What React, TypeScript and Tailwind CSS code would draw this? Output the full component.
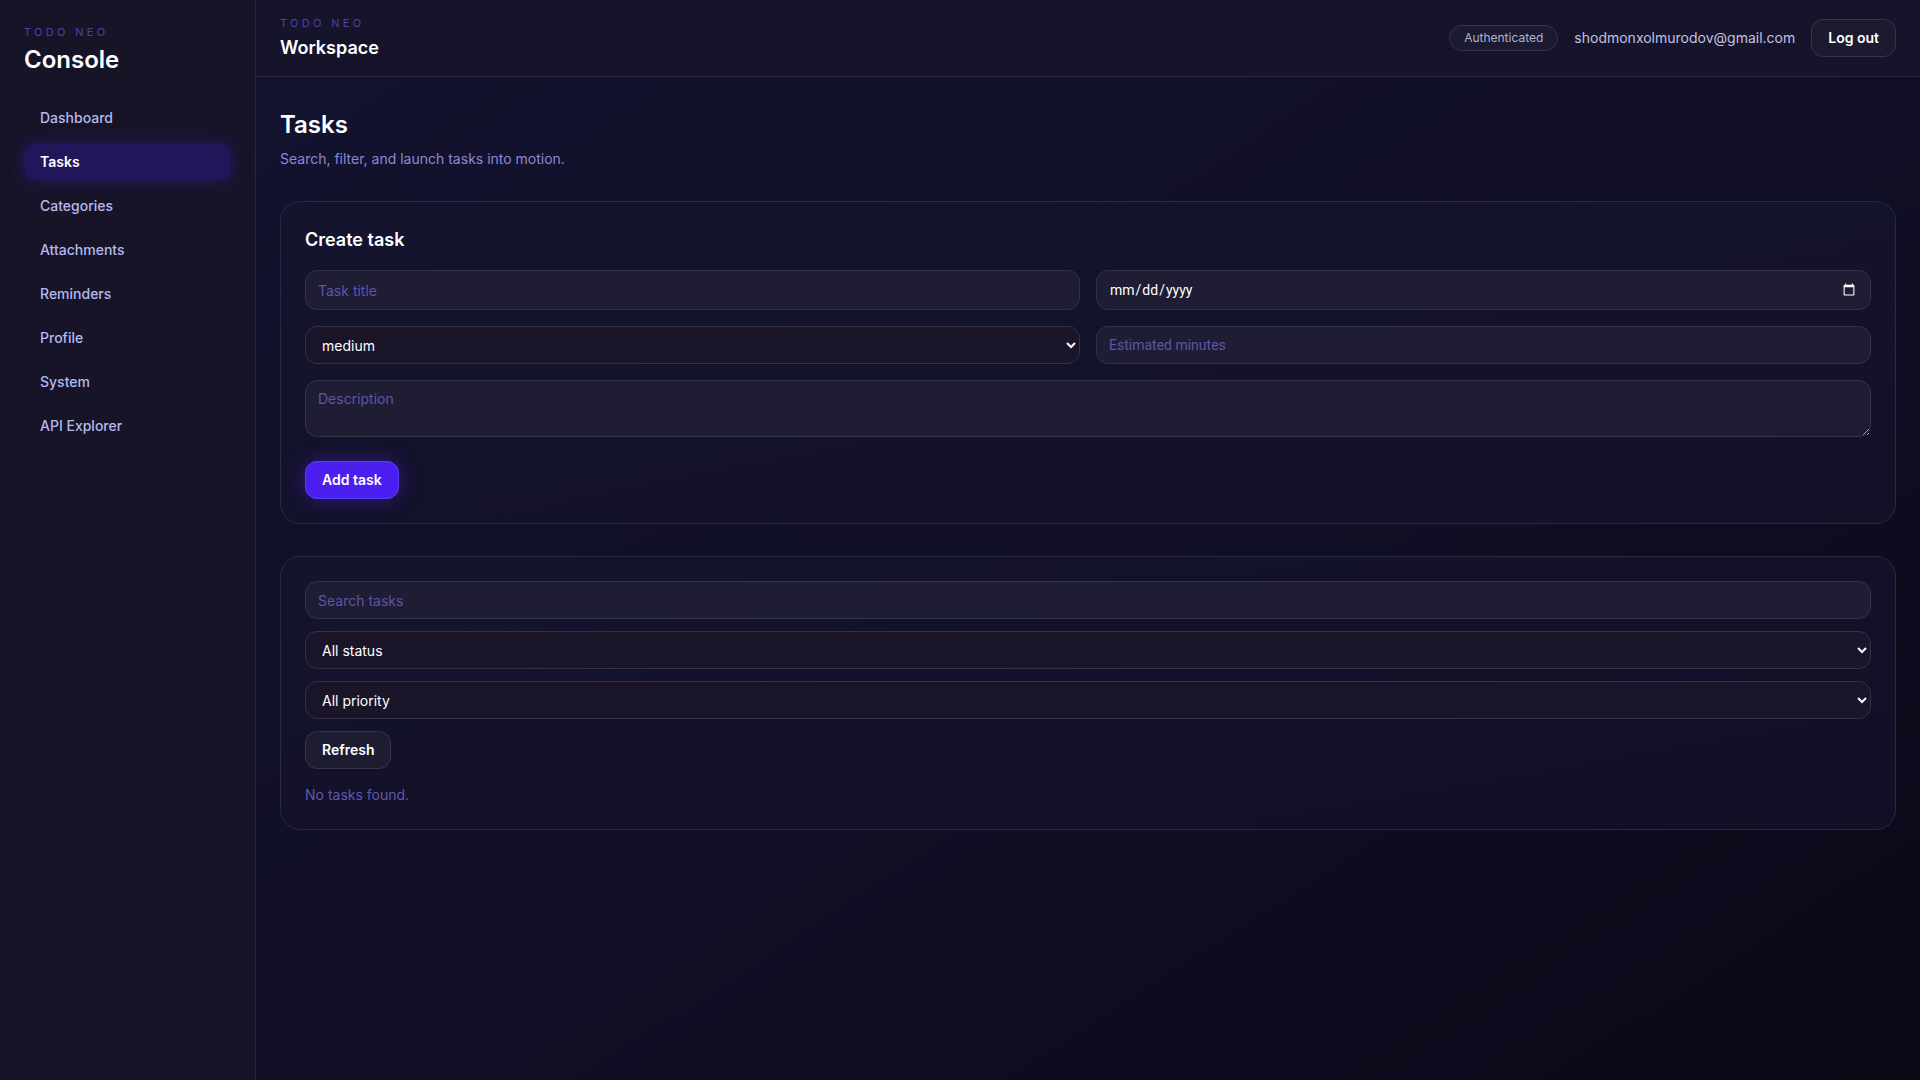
import React from "react";

const navItems = [
  "Dashboard",
  "Tasks",
  "Categories",
  "Attachments",
  "Reminders",
  "Profile",
  "System",
  "API Explorer",
];

const font = { fontFamily: "Inter, 'Noto Sans', sans-serif" };

function Sidebar() {
  return (
    <aside className="w-[256px] shrink-0 border-r border-[#2a2740] bg-[#171428] px-6 pt-6">
      <div className="text-[11px] leading-4 tracking-[0.3em] text-[#4c41a8]">TODO NEO</div>
      <div className="mt-1 text-2xl leading-8 font-semibold text-white">Console</div>
      <nav className="mt-6 flex flex-col gap-2">
        {navItems.map((item) => {
          const active = item === "Tasks";
          return (
            <div
              key={item}
              className={
                active
                  ? "flex h-9 items-center rounded-xl bg-[#21165a] px-4 text-sm font-semibold text-white shadow-[0_0_18px_rgba(60,30,170,0.45)]"
                  : "flex h-9 items-center rounded-xl px-4 text-sm font-medium text-[#b4b9ee]"
              }
            >
              {item}
            </div>
          );
        })}
      </nav>
    </aside>
  );
}

function Header() {
  return (
    <header className="flex h-[77px] shrink-0 items-center justify-between border-b border-[#2a2740] bg-[#16142a] px-6">
      <div className="flex flex-col">
        <div className="text-[11px] leading-4 tracking-[0.3em] text-[#4c41a8]">TODO NEO</div>
        <div className="mt-[3px] text-lg leading-7 font-semibold text-white">Workspace</div>
      </div>
      <div className="flex items-center gap-4">
        <span className="flex h-[26px] items-center rounded-full border border-[#35334d] bg-[#1c1a30] px-[14px] text-xs text-[#b3b0d4]">
          Authenticated
        </span>
        <span className="text-sm text-[#c3c1e2]">shodmonxolmurodov@gmail.com</span>
        <button className="h-[38px] rounded-xl border border-[#35334d] bg-[#1c1a2e] px-4 text-sm font-semibold text-white">
          Log out
        </button>
      </div>
    </header>
  );
}

const inputCls =
  "w-full rounded-xl border border-[#33324b] bg-[#1e1d34] px-3 text-sm text-white placeholder:text-[#5c56a8] outline-none";
const selectCls =
  "w-full rounded-xl border border-[#33304a] bg-[#1a1529] px-3 text-sm text-white outline-none [color-scheme:dark]";

function CreateTask() {
  return (
    <section className="rounded-[20px] border border-[#2a2944] bg-gradient-to-br from-[#15142e] to-[#121128] p-6">
      <h2 className="text-lg leading-7 font-semibold text-white">Create task</h2>
      <div className="mt-4 grid grid-cols-2 gap-4">
        <input className={`${inputCls} h-10`} placeholder="Task title" />
        <input
          type="date"
          className={`${inputCls} h-10 [color-scheme:dark]`}
          style={{ fontFamily: "Roboto, sans-serif" }}
        />
        <select className={`${selectCls} h-[38px]`} defaultValue="medium">
          <option value="low">low</option>
          <option value="medium">medium</option>
          <option value="high">high</option>
        </select>
        <input
          type="number"
          className={`${inputCls} h-[38px]`}
          style={{ fontFamily: "Roboto, sans-serif" }}
          placeholder="Estimated minutes"
        />
        <textarea
          className={`${inputCls} col-span-2 h-[57px] py-2`}
          placeholder="Description"
        />
      </div>
      <button className="mt-6 h-[38px] rounded-xl border border-[#5a3cff] bg-[#4a1ff0] px-4 text-sm font-semibold text-white shadow-[0_0_20px_rgba(74,31,240,0.45)]">
        Add task
      </button>
    </section>
  );
}

function TaskList() {
  return (
    <section className="rounded-[20px] border border-[#2a2944] bg-gradient-to-br from-[#15142e] to-[#110f25] p-6">
      <div className="flex flex-col gap-3">
        <input className={`${inputCls} h-[38px]`} placeholder="Search tasks" />
        <select className={`${selectCls} h-[38px]`} defaultValue="">
          <option value="">All status</option>
          <option value="todo">todo</option>
          <option value="done">done</option>
        </select>
        <select className={`${selectCls} h-[38px]`} defaultValue="">
          <option value="">All priority</option>
          <option value="low">low</option>
          <option value="high">high</option>
        </select>
        <div>
          <button className="h-[38px] rounded-xl border border-[#35344c] bg-[#1d1c31] px-4 text-sm font-semibold text-white">
            Refresh
          </button>
        </div>
        <p className="mt-1 text-sm leading-5 text-[#5f58b0]">No tasks found.</p>
      </div>
    </section>
  );
}

export default function App() {
  return (
    <div className="flex min-h-screen bg-[#171428]" style={font}>
      <Sidebar />
      <div className="flex min-h-screen flex-1 flex-col bg-gradient-to-br from-[#141330] via-[#100f26] to-[#0a0918]">
        <Header />
        <main className="px-6 pt-8 pb-10">
          <h1 className="text-2xl leading-8 font-semibold text-white">Tasks</h1>
          <p className="mt-2 text-sm leading-5 text-[#8d87d6]">
            Search, filter, and launch tasks into motion.
          </p>
          <div className="mt-8 flex flex-col gap-8">
            <CreateTask />
            <TaskList />
          </div>
        </main>
      </div>
    </div>
  );
}
